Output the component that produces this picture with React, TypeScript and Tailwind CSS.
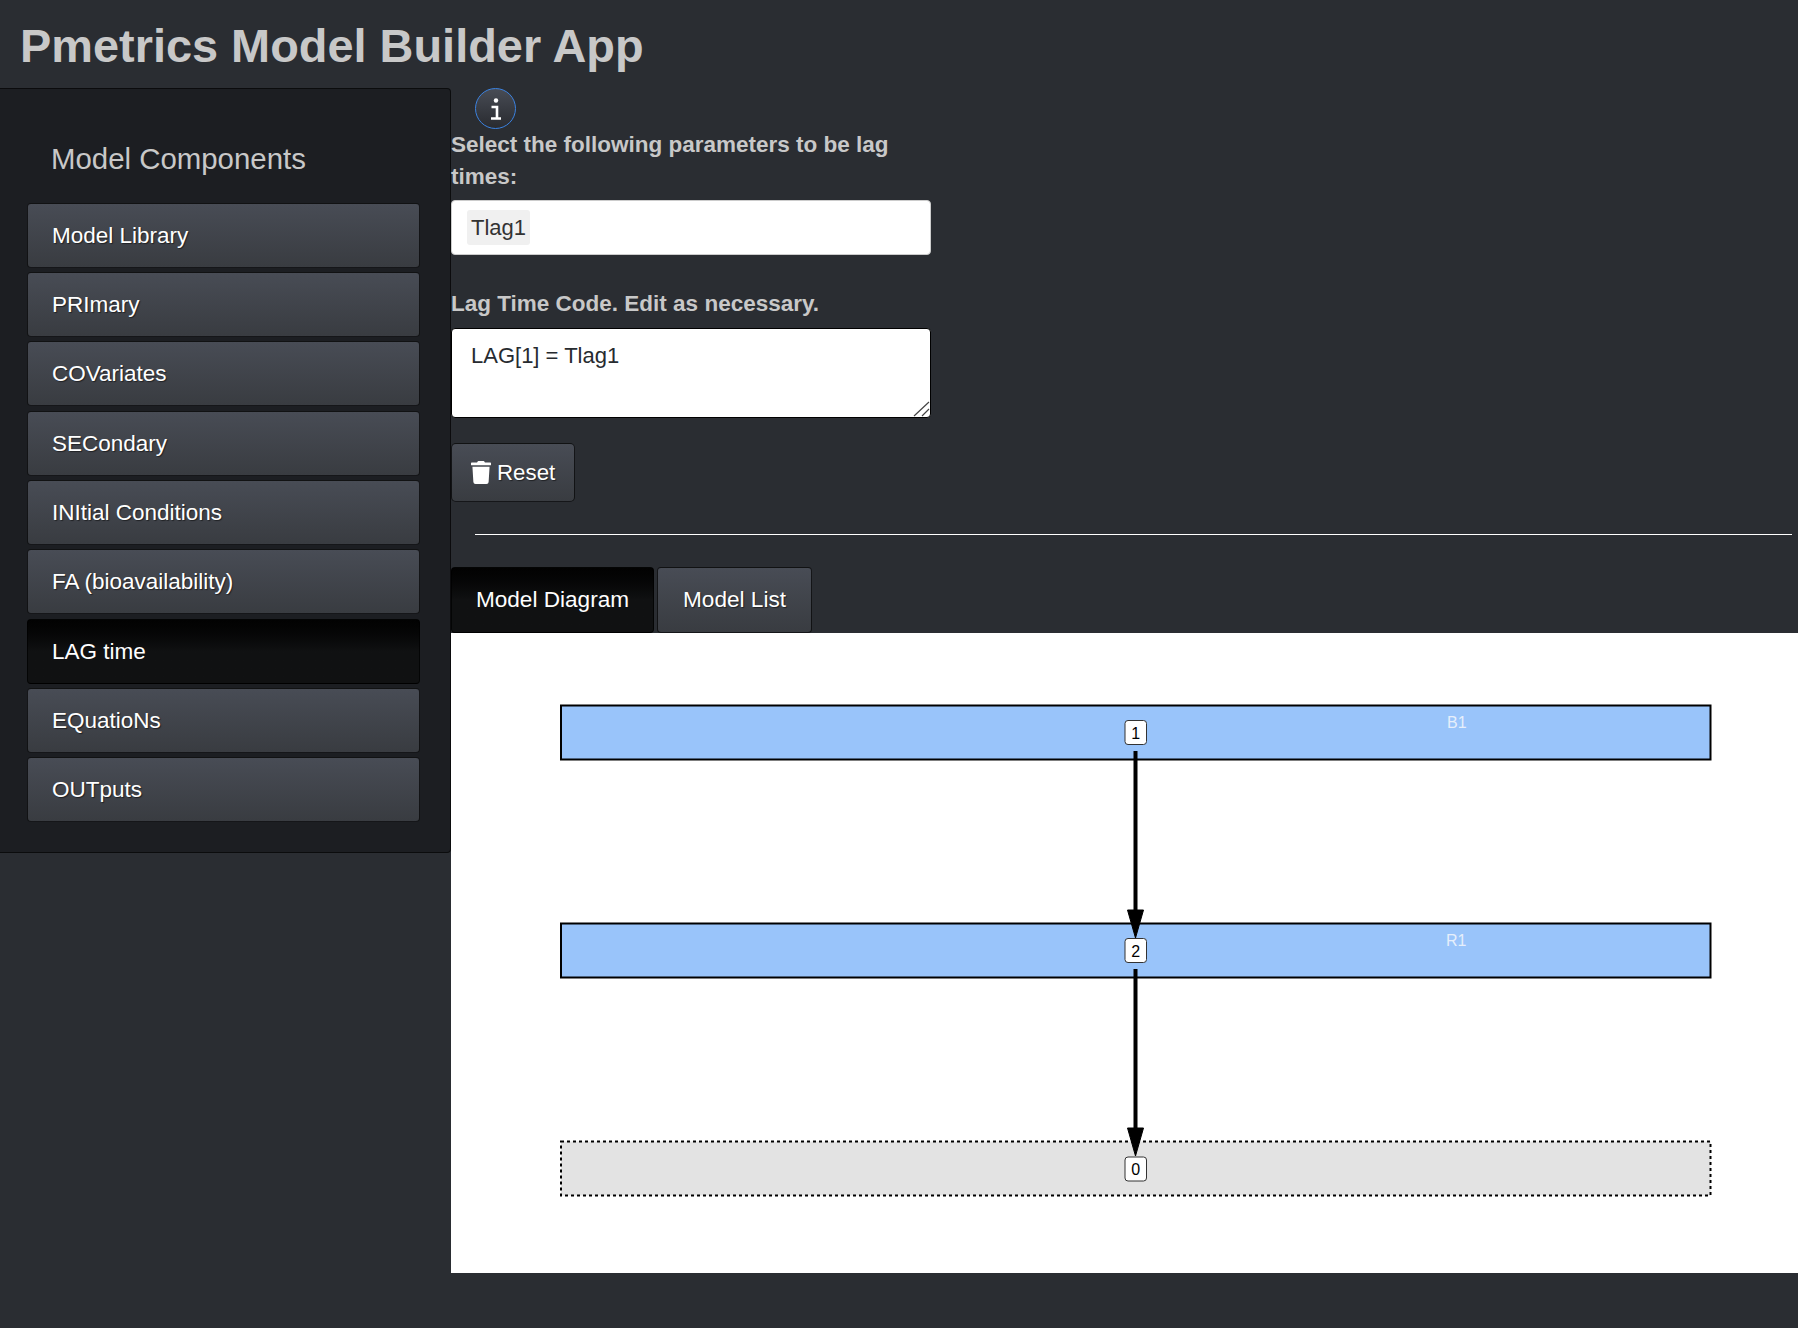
import React from "react";
import { FaTrash } from "react-icons/fa";

const menuItems = [
  "Model Library",
  "PRImary",
  "COVariates",
  "SECondary",
  "INItial Conditions",
  "FA (bioavailability)",
  "LAG time",
  "EQuatioNs",
  "OUTputs",
];

const idleBtn =
  "border border-[rgba(0,0,0,0.7)] bg-linear-to-b from-[#484c55] to-[#393c41] text-white [text-shadow:1px_1px_1px_rgba(0,0,0,0.5)]";
const activeBtn =
  "border border-[rgba(0,0,0,0.7)] bg-linear-to-b from-[#020202] via-[#101112] to-[#101112] text-white";

const Diagram = () => (
  <svg width="1347" height="640" viewBox="451 633 1347 640" className="block">
    <rect x="561" y="705.5" width="1149.5" height="54" fill="#99c4fa" stroke="#000" strokeWidth="2" />
    <rect x="561" y="923.5" width="1149.5" height="54" fill="#99c4fa" stroke="#000" strokeWidth="2" />
    <rect x="561" y="1141.5" width="1149.5" height="54" fill="#e3e3e3" stroke="#000" strokeWidth="2" strokeDasharray="3 3" />
    <text x="1447" y="727.5" fontSize="16" fill="#e6effb" fontFamily="Liberation Sans, sans-serif">B1</text>
    <text x="1446" y="945.5" fontSize="16" fill="#e6effb" fontFamily="Liberation Sans, sans-serif">R1</text>
    <path d="M1135.5 751V912M1135.5 969V1130" stroke="#000" strokeWidth="4" fill="none" />
    <path d="M1127.5 910H1143.5L1135.5 938ZM1127.5 1128H1143.5L1135.5 1156Z" fill="#000" stroke="#000" strokeWidth="1" />
    {[
      { y: 720.5, t: "1" },
      { y: 938.5, t: "2" },
      { y: 1157, t: "0" },
    ].map((n) => (
      <g key={n.t}>
        <rect x="1125" y={n.y} width="21.5" height="24" rx="3" fill="#fff" stroke="#333" strokeWidth="1" />
        <text x="1135.7" y={n.y + 18} fontSize="16" textAnchor="middle" fill="#000" fontFamily="Liberation Sans, sans-serif">
          {n.t}
        </text>
      </g>
    ))}
  </svg>
);

export default function App() {
  return (
    <div className="min-h-[1328px] overflow-hidden bg-[#2a2d32] font-['Liberation_Sans',Arial,sans-serif] text-[#c8c8c8]">
      <h1 className="h-[88px] pl-[20px] pt-[17px] text-[46.9px] font-bold leading-[58px] text-[#c8c8c8]">
        Pmetrics Model Builder App
      </h1>

      <div className="flex items-start">
        {/* Sidebar */}
        <aside className="h-[765px] w-[451px] shrink-0 rounded-r-[4px] border border-l-0 border-[rgba(0,0,0,0.6)] bg-[#1c1e22] pl-[27px] pt-[50px]">
          <h2 className="mb-[23.5px] pl-[24px] text-[29.4px] leading-[40px]">Model Components</h2>
          <div className="flex w-[393px] flex-col gap-[4.35px]">
            {menuItems.map((item) => (
              <button
                key={item}
                type="button"
                className={`h-[65px] rounded-[4px] pl-[24px] pt-[1px] text-left text-[22.5px] ${item === "LAG time" ? activeBtn : idleBtn}`}
              >
                {item}
              </button>
            ))}
          </div>
        </aside>

        {/* Main */}
        <main className="min-w-0 flex-1">
          <button
            type="button"
            className="ml-[24px] flex h-[41px] w-[41px] items-center justify-center rounded-full border-[1.5px] border-[#3b82e0] bg-linear-to-b from-[#484c55] to-[#292b30]"
          >
            <svg width="14" height="24" viewBox="0 0 14 24" fill="none">
              <circle cx="7" cy="3.5" r="2.2" fill="#fff" />
              <path d="M2.5 10H8V21M2 21.5H12" stroke="#fff" strokeWidth="2.6" />
            </svg>
          </button>

          <label className="block w-[480px] text-[22.5px] font-bold leading-[32px]">
            Select the following parameters to be lag times:
          </label>
          <div className="mt-[7px] flex h-[55px] w-[480px] items-center rounded-[4px] border border-[#ccc] bg-white pl-[15px]">
            <span className="flex h-[35px] items-center rounded-[3px] bg-[#f0f0f0] px-[4px] text-[22px] text-[#333]">Tlag1</span>
          </div>

          <label className="mt-[33px] block text-[22.5px] font-bold leading-[32px]">
            Lag Time Code. Edit as necessary.
          </label>
          <div className="relative mt-[8px] h-[90px] w-[480px]">
            <textarea
              readOnly
              defaultValue="LAG[1] = Tlag1"
              className="block h-full w-full resize-none rounded-[4px] border border-black bg-white px-[19px] py-[11px] text-[22px] leading-[32px] text-[#272b30] outline-none"
            />
            <svg width="17" height="17" viewBox="0 0 17 17" fill="none" className="absolute bottom-[1px] right-[1px]">
              <path d="M1 16L16 2M9 16L16 9" stroke="#444" strokeWidth="1.2" />
            </svg>
          </div>

          <button
            type="button"
            className={`mt-[25px] flex h-[59px] w-[124px] items-center rounded-[5px] pl-[19px] text-[22.3px] ${idleBtn}`}
          >
            <FaTrash className="mr-[6px] h-[23px] w-[20px]" />
            Reset
          </button>

          <hr className="ml-[24px] mr-[6px] mt-[32px] border-t-[1.5px] border-white" />

          <div className="mt-[32px] flex gap-[3px]">
            <button
              type="button"
              className={`h-[66px] w-[203px] rounded-[4px] text-[22.6px] ${activeBtn}`}
            >
              Model Diagram
            </button>
            <button
              type="button"
              className={`h-[66px] w-[155px] rounded-[4px] text-[22.6px] ${idleBtn}`}
            >
              Model List
            </button>
          </div>

          <div className="bg-white">
            <Diagram />
          </div>
        </main>
      </div>
    </div>
  );
}
